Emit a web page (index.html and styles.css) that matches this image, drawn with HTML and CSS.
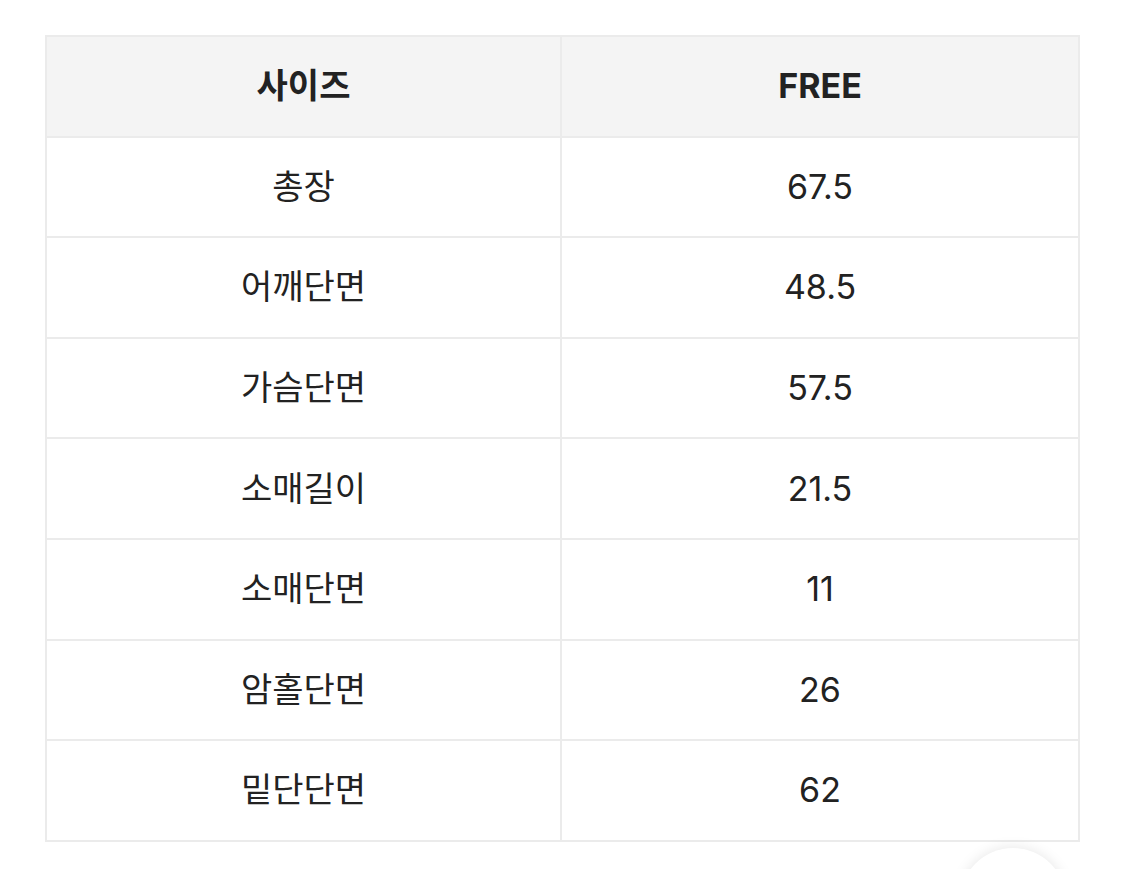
FILE: index.html
```html
<!DOCTYPE html>
<html lang="ko">
<head>
<meta charset="utf-8">
<link rel="stylesheet" href="styles.css">
</head>
<body>
<div class="page">
  <table class="size-table">
    <colgroup><col class="col-label"><col class="col-value"></colgroup>
    <thead>
      <tr><th>사이즈</th><th>FREE</th></tr>
    </thead>
    <tbody>
      <tr><td>총장</td><td>67.5</td></tr>
      <tr><td>어깨단면</td><td>48.5</td></tr>
      <tr><td>가슴단면</td><td>57.5</td></tr>
      <tr><td>소매길이</td><td>21.5</td></tr>
      <tr><td>소매단면</td><td>11</td></tr>
      <tr><td>암홀단면</td><td>26</td></tr>
      <tr><td>밑단단면</td><td>62</td></tr>
    </tbody>
  </table>
  <div class="fab"></div>
</div>
</body>
</html>
```
FILE: styles.css
```css
html, body {
  margin: 0;
  padding: 0;
  background: #ffffff;
  overflow: hidden;
}
.page {
  width: 1125px;
  height: 869px;
  padding: 35px 45px 0 45px;
  box-sizing: border-box;
  position: relative;
  overflow: hidden;
  font-family: Inter, "Noto Sans CJK KR", sans-serif;
  color: #222222;
}
.size-table {
  width: 1035px;
  border-collapse: collapse;
  table-layout: fixed;
  border: 2px solid #ebebeb;
}
.col-label { width: 515px; }
.col-value { width: auto; }
.size-table th,
.size-table td {
  border: 2px solid #ebebeb;
  height: 98.6px;
  padding: 0;
  text-align: center;
  vertical-align: middle;
  font-size: 34px;
  line-height: 1;
}
.size-table th {
  background: #f4f4f4;
  font-weight: 700;
}
.size-table td {
  font-weight: 400;
}
.fab {
  position: absolute;
  left: 960px;
  top: 848px;
  width: 106px;
  height: 106px;
  border-radius: 50%;
  background: #ffffff;
  box-shadow: 0 0 14px rgba(0, 0, 0, 0.10);
}
```
